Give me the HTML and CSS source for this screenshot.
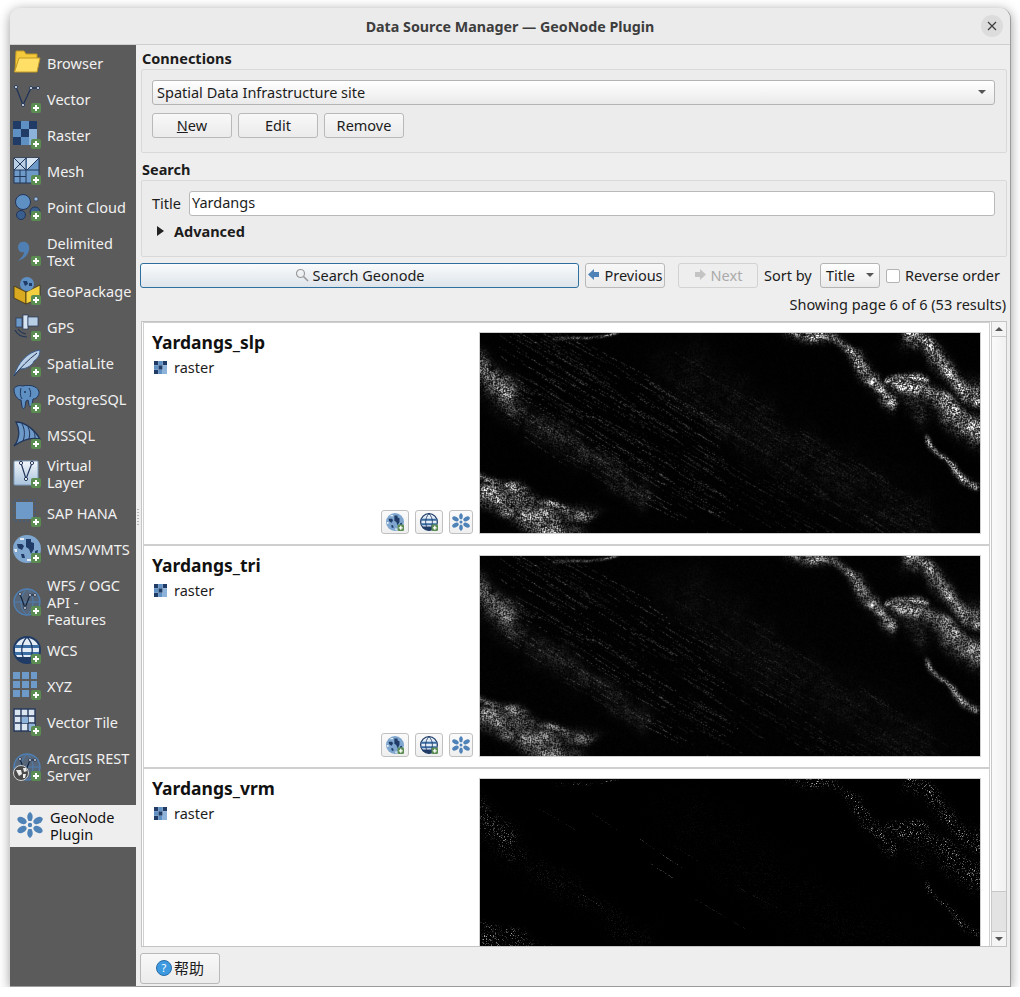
FILE: index.html
```html
<!DOCTYPE html>
<html lang="en">
<head>
  <meta charset="UTF-8" />
  <title>Data Source Manager — GeoNode Plugin</title>
  <link rel="stylesheet" href="styles.css">
</head>
<body>

  <svg class="icon-defs" aria-hidden="true">
    <defs>
      <linearGradient id="paleBox" x1="0" y1="0" x2="0" y2="1">
        <stop offset="0" stop-color="#f2f6fa"/>
        <stop offset="1" stop-color="#a9c3dd"/>
      </linearGradient>
      <g id="i-plus">
        <rect x="18" y="18" width="10" height="10" rx="2" fill="#5b8c51"/>
        <path d="M23 20v6M20 23h6" stroke="#fff" stroke-width="2"/>
      </g>
      <g id="i-folder">
        <path d="M2 23 3 2h8l2 3h11v5H7z" fill="#f4c93c" stroke="#c39a22"/>
        <path d="M1.500 23 6 9h21l-3 14z" fill="#ffdf66" stroke="#c39a22"/>
      </g>
      <g id="i-vector" fill="#fff" stroke="#22365a" stroke-width="1">
        <path d="M3 2 10 20 18 3h7" fill="none" stroke-width="1.300"/>
        <circle cx="3" cy="2" r="1.500"/>
        <circle cx="10" cy="20" r="1.500"/>
        <circle cx="18" cy="3" r="1.500"/>
        <circle cx="25" cy="3" r="1.500"/>
      </g>
      <g id="i-raster">
        <path d="M0 0h8v8H0zM16 0h8v8h-8zM8 8h8v8H8zM0 16h8v8H0z" fill="#1f3b66"/>
        <path d="M8 0h8v8H8zM0 8h8v8H0zM8 16h8v8H8z" fill="#5f90c4"/>
        <path d="M16 8h8v8h-8zM16 16h8v8h-8z" fill="#8db3da"/>
      </g>
      <g id="i-mesh">
        <rect x="1" y="1" width="25" height="25" fill="#6d9ac8" stroke="#22365a"/>
        <path d="M1 13h12V1H1z" fill="#b9cfe5"/>
        <path d="M14 13V1h12z" fill="#d7e4f1"/>
        <path d="M1 1l12 12M13 1 1 13M13 1v25M1 13h25M1 19.500h12M7 13v13M14 13 26 1" stroke="#22365a" fill="none"/>
      </g>
      <g id="i-cloud">
        <circle cx="10" cy="9" r="7.500" fill="#5f90c4" stroke="#22365a"/>
        <circle cx="23" cy="6" r="2" fill="#9dbcdc" stroke="#22365a" stroke-width=".6"/>
        <circle cx="8" cy="22" r="4.500" fill="#3a5f8f" stroke="#22365a"/>
        <circle cx="22" cy="19" r="5" fill="#3a5f8f" stroke="#22365a"/>
      </g>
      <g id="i-comma">
        <path d="M9 4c5-1 8 3 7 8-1 5-5 9-11 11 3-3 6-6 6-9-3 1-6-1-6-5 0-3 2-5 4-5z" fill="#4f7fb3"/>
      </g>
      <g id="i-geopackage">
        <path d="M1 9 13 15v12L1 21z" fill="#d9a91f" stroke="#3b3216" stroke-width=".8"/>
        <path d="M13 15 27 8v13l-14 6z" fill="#f4d03f" stroke="#3b3216" stroke-width=".8"/>
        <circle cx="14" cy="7" r="7" fill="#5f90c4"/>
        <path d="M10 4h4l1 3-3 2zM16 6h3v3h-3z" fill="#1f3b66"/>
      </g>
      <g id="i-gps">
        <rect x="3" y="5" width="6" height="9" fill="#6d9ac8" stroke="#22365a" stroke-width=".7"/>
        <rect x="10" y="2" width="5" height="14" fill="#d7e4f1" stroke="#22365a" stroke-width=".7"/>
        <rect x="15" y="4" width="10" height="9" fill="#b9cfe5" stroke="#22365a" stroke-width=".7"/>
        <path d="M2 17c2 4 6 7 12 7M5 16c2 3 4 4 8 5" fill="none" stroke="#22365a" stroke-width="1.200"/>
      </g>
      <g id="i-feather">
        <path d="M1 27C5 14 14 3 27 1c0 6-3 9-6 11-1 3-6 8-14 8-2 2-4 4-6 7z" fill="#b9cfe5" stroke="#3a5f8f"/>
        <path d="M1 27C8 18 15 11 24 4" fill="none" stroke="#22365a"/>
      </g>
      <g id="i-elephant">
        <path d="M1 5C1 1 6 0 10 1c3-1 9-1 12 1 4 2 5 6 3 9-1 2-3 3-5 3l-1 6c-1 2-3 2-3 0l-1-5-2 1-1 6c-1 2-2 2-3 0l-1-7C5 15 1 10 1 5z" fill="#5f90c4" stroke="#22365a"/>
        <path d="M8 3c-1 4-1 8 1 11M16 3c2 3 2 6 1 9" fill="none" stroke="#22365a"/>
        <circle cx="12" cy="7" r="1" fill="#22365a"/>
      </g>
      <g id="i-sail">
        <path d="M1 25C7 18 7 8 3 1c9 0 19 8 24 17-9-2-18 1-26 7z" fill="#6d9ac8" stroke="#22365a" stroke-width="1.300"/>
        <path d="M9 3c3 5 3 12 1 17M15 6c2 4 2 8 1 12M21 11c1 2 1 4 1 6" fill="none" stroke="#22365a"/>
      </g>
      <g id="i-virtual">
        <rect x="1" y="1" width="24" height="24" rx="1" fill="url(#paleBox)" stroke="#7f9dbd"/>
        <path d="M8 3 13 19 19 3" fill="none" stroke="#22365a" stroke-width="1.200"/>
        <g fill="#fff" stroke="#22365a">
          <circle cx="8" cy="3" r="1.600"/>
          <circle cx="13" cy="19" r="1.600"/>
          <circle cx="19" cy="3" r="1.600"/>
        </g>
      </g>
      <g id="i-hana">
        <rect x="1" y="1" width="21" height="21" fill="none" stroke="#3a5f8f" stroke-dasharray="2 2"/>
        <rect x="3" y="3" width="17" height="17" fill="#6d9ac8"/>
      </g>
      <g id="i-globe">
        <circle cx="14" cy="14" r="14" fill="#7ea6cf"/>
        <path d="M4 9h5l2 2-2 4-4-2zM13 4h5v3l3 1v6l-3 5-2-5-3-2zM8 19h3l1 4H9zM22 16l3-1-1 5-2 1z" fill="#1f3b66"/>
        <path d="M7 3h4v2H7zM1 14h3v3H2zM14 24h5v2h-5z" fill="#e4edf6"/>
      </g>
      <g id="i-wfs">
        <circle cx="14" cy="14" r="13" fill="#4f7fb3" fill-opacity=".35" stroke="#4f7fb3" stroke-width="1.400"/>
        <path d="M1 14h26M14 1c-8 7-8 19 0 26M14 1c8 7 8 19 0 26" fill="none" stroke="#4f7fb3"/>
        <path d="M7 6l5 14 5-13h5" fill="none" stroke="#14233f" stroke-width="1.200"/>
        <g fill="#fff" stroke="#14233f" stroke-width=".8">
          <circle cx="7" cy="6" r="1.400"/>
          <circle cx="12" cy="20" r="1.400"/>
          <circle cx="17" cy="7" r="1.400"/>
          <circle cx="22" cy="7" r="1.400"/>
        </g>
      </g>
      <g id="i-wcs">
        <circle cx="14" cy="14" r="13" fill="#e4edf6" stroke="#1f3b66" stroke-width="2"/>
        <path d="M2 9h24v3H2zM2 16h24v3H2z" fill="#3a6ea5"/>
        <path d="M14 1c-7 7-7 19 0 26M14 1c7 7 7 19 0 26" fill="none" stroke="#1f3b66" stroke-width="1.300"/>
        <path d="M3 21h22c-3 4-7 6-11 6s-8-2-11-6z" fill="#1f3b66"/>
      </g>
      <g id="i-xyz" fill="#6d9ac8">
        <rect x="0" y="0" width="7" height="7"/><rect x="9" y="0" width="7" height="7"/><rect x="18" y="0" width="6" height="7"/>
        <rect x="0" y="9" width="7" height="7"/><rect x="9" y="9" width="7" height="7"/><rect x="18" y="9" width="6" height="7"/>
        <rect x="0" y="18" width="7" height="7"/><rect x="9" y="18" width="7" height="7"/>
      </g>
      <g id="i-vtile">
        <rect x="1" y="1" width="21" height="22" fill="#dbe6f1" stroke="#22365a" stroke-width="1.400"/>
        <path d="M2 8h20M2 15h20M8 1v22M15 1v22" stroke="#22365a" stroke-width="1.400"/>
        <path d="M9 9h6v6H9zM16 16h6v7h-6z" fill="#8db3da"/>
      </g>
      <g id="i-arcgis">
        <use href="#i-wfs"/>
        <circle cx="8" cy="20" r="7.500" fill="#4a4a4a" stroke="#d0d0d0"/>
        <path d="M3 17h5l1 4-3 2zM10 15h3l1 3-3 1zM10 21h3l-1 4-2 0z" fill="#ececec"/>
      </g>
      <g id="i-flower" fill="#4f83b8">
        <path d="M13 0c3 2 3.500 5 1.500 9h-3C9.500 5 10 2 13 0zM13 26c-3-2-3.500-5-1.500-9h3c2 4 1.500 7-1.500 9z"/>
        <ellipse cx="5" cy="8.500" rx="5" ry="3.200" transform="rotate(28 5 8.500)"/>
        <ellipse cx="21" cy="8.500" rx="5" ry="3.200" transform="rotate(-28 21 8.500)"/>
        <ellipse cx="5" cy="17.500" rx="5" ry="3.200" transform="rotate(-28 5 17.500)"/>
        <ellipse cx="21" cy="17.500" rx="5" ry="3.200" transform="rotate(28 21 17.500)"/>
        <circle cx="13" cy="13" r="2.200"/>
      </g>
    </defs>
  </svg>

  <div class="window">
    <header class="titlebar">
      <span>Data Source Manager — GeoNode Plugin</span>
      <button class="close-btn" aria-label="Close">
        <svg width="10" height="10" viewBox="0 0 10 10"><path d="M1 1l8 8M9 1 1 9" stroke="#3d3d3d" stroke-width="1.200"/></svg>
      </button>
    </header>

    <div class="dialog">
      <nav class="sidebar">
        <a class="nav-item"><svg class="nav-icon"><use href="#i-folder"/></svg>Browser</a>
        <a class="nav-item"><svg class="nav-icon"><use href="#i-vector"/><use href="#i-plus"/></svg>Vector</a>
        <a class="nav-item"><svg class="nav-icon"><use href="#i-raster"/><use href="#i-plus"/></svg>Raster</a>
        <a class="nav-item"><svg class="nav-icon"><use href="#i-mesh"/><use href="#i-plus"/></svg>Mesh</a>
        <a class="nav-item"><svg class="nav-icon"><use href="#i-cloud"/><use href="#i-plus"/></svg>Point Cloud</a>
        <a class="nav-item nav-delim"><svg class="nav-icon"><use href="#i-comma"/><use href="#i-plus"/></svg>Delimited<br>Text</a>
        <a class="nav-item"><svg class="nav-icon"><use href="#i-geopackage"/><use href="#i-plus"/></svg>GeoPackage</a>
        <a class="nav-item"><svg class="nav-icon"><use href="#i-gps"/><use href="#i-plus"/></svg>GPS</a>
        <a class="nav-item"><svg class="nav-icon"><use href="#i-feather"/><use href="#i-plus"/></svg>SpatiaLite</a>
        <a class="nav-item"><svg class="nav-icon"><use href="#i-elephant"/><use href="#i-plus"/></svg>PostgreSQL</a>
        <a class="nav-item"><svg class="nav-icon"><use href="#i-sail"/><use href="#i-plus"/></svg>MSSQL</a>
        <a class="nav-item nav-two"><svg class="nav-icon"><use href="#i-virtual"/><use href="#i-plus"/></svg>Virtual<br>Layer</a>
        <a class="nav-item"><svg class="nav-icon"><use href="#i-hana"/><use href="#i-plus"/></svg>SAP HANA</a>
        <a class="nav-item"><svg class="nav-icon"><use href="#i-globe"/><use href="#i-plus"/></svg>WMS/WMTS</a>
        <a class="nav-item nav-three"><svg class="nav-icon"><use href="#i-wfs"/><use href="#i-plus"/></svg>WFS / OGC<br>API -<br>Features</a>
        <a class="nav-item"><svg class="nav-icon"><use href="#i-wcs"/><use href="#i-plus"/></svg>WCS</a>
        <a class="nav-item"><svg class="nav-icon"><use href="#i-xyz"/><use href="#i-plus"/></svg>XYZ</a>
        <a class="nav-item"><svg class="nav-icon"><use href="#i-vtile"/><use href="#i-plus"/></svg>Vector Tile</a>
        <a class="nav-item nav-arcgis"><svg class="nav-icon"><use href="#i-arcgis"/><use href="#i-plus"/></svg>ArcGIS REST<br>Server</a>
        <a class="nav-item nav-active"><svg class="nav-icon"><use href="#i-flower"/></svg>GeoNode<br>Plugin</a>
      </nav>

      <main class="content">
        <div class="group-title">Connections</div>
        <section class="group group-conn">
          <div class="combo combo-wide">
            <span>Spatial Data Infrastructure site</span>
            <i class="caret"></i>
          </div>
          <div class="btn-row">
            <button class="btn btn-std"><span><u>N</u>ew</span></button>
            <button class="btn btn-std">Edit</button>
            <button class="btn btn-std">Remove</button>
          </div>
        </section>

        <div class="group-title group-title-search">Search</div>
        <section class="group group-search">
          <div class="title-row">
            <label class="title-label">Title</label>
            <div class="text-input">Yardangs</div>
          </div>
          <div class="advanced"><i class="arrow-right"></i><b>Advanced</b></div>
        </section>

        <div class="toolbar">
          <button class="btn btn-search">
            <svg width="14" height="14" viewBox="0 0 14 14"><circle cx="5.500" cy="5.500" r="4" fill="none" stroke="#9a9a9a" stroke-width="1.200"/><path d="M8.500 8.500l4.500 4.500" stroke="#9a9a9a" stroke-width="1.600"/></svg>
            Search Geonode
          </button>
          <button class="btn btn-std btn-prev">
            <svg width="13" height="13" viewBox="0 0 13 13"><path d="M7 1 1 6.500 7 12V9h5V4H7z" fill="#4f83b8"/></svg>
            Previous
          </button>
          <button class="btn btn-std btn-next" disabled>
            <svg width="13" height="13" viewBox="0 0 13 13"><path d="M6 1l6 5.500L6 12V9H1V4h5z" fill="#c4c4c4"/></svg>
            Next
          </button>
          <span class="sort-label">Sort by</span>
          <div class="combo combo-sort"><span>Title</span><i class="caret"></i></div>
          <i class="checkbox"></i>
          <span class="reverse-label">Reverse order</span>
        </div>

        <div class="status">Showing page 6 of 6 (53 results)</div>

        <div class="list">
          <div class="cards">
            <article class="card">
              <div class="card-info">
                <h3>Yardangs_slp</h3>
                <div class="layer-type"><svg width="13" height="13" viewBox="0 0 24 24"><use href="#i-raster"/></svg>raster</div>
                <div class="card-actions">
                  <button class="mini-btn mini-wide"><svg width="18" height="18" viewBox="0 0 28 28"><use href="#i-globe"/><use href="#i-plus"/></svg></button>
                  <button class="mini-btn mini-wide"><svg width="18" height="18" viewBox="0 0 28 28"><use href="#i-wcs"/><use href="#i-plus"/></svg></button>
                  <button class="mini-btn"><svg width="18" height="18" viewBox="0 0 26 26"><use href="#i-flower"/></svg></button>
                </div>
              </div>
              <canvas class="thumb" width="500" height="200" data-kind="slp"></canvas>
            </article>
            <article class="card">
              <div class="card-info">
                <h3>Yardangs_tri</h3>
                <div class="layer-type"><svg width="13" height="13" viewBox="0 0 24 24"><use href="#i-raster"/></svg>raster</div>
                <div class="card-actions">
                  <button class="mini-btn mini-wide"><svg width="18" height="18" viewBox="0 0 28 28"><use href="#i-globe"/><use href="#i-plus"/></svg></button>
                  <button class="mini-btn mini-wide"><svg width="18" height="18" viewBox="0 0 28 28"><use href="#i-wcs"/><use href="#i-plus"/></svg></button>
                  <button class="mini-btn"><svg width="18" height="18" viewBox="0 0 26 26"><use href="#i-flower"/></svg></button>
                </div>
              </div>
              <canvas class="thumb" width="500" height="200" data-kind="tri"></canvas>
            </article>
            <article class="card">
              <div class="card-info">
                <h3>Yardangs_vrm</h3>
                <div class="layer-type"><svg width="13" height="13" viewBox="0 0 24 24"><use href="#i-raster"/></svg>raster</div>
              </div>
              <canvas class="thumb" width="500" height="200" data-kind="vrm"></canvas>
            </article>
          </div>
          <div class="scrollbar">
            <div class="scroll-btn"><i class="scroll-up"></i></div>
            <div class="scroll-handle"></div>
            <div class="scroll-track"></div>
            <div class="scroll-btn"><i class="scroll-down"></i></div>
          </div>
        </div>

        <div class="footer">
          <button class="btn btn-help"><span class="help-icon">?</span>帮助</button>
        </div>

        <i class="splitter"></i>
      </main>
    </div>
  </div>

  <script src="thumbs.js"></script>
</body>
</html>
```

FILE: styles.css
```css
* {
  box-sizing: border-box;
}

body {
  margin: 0;
  background-color: #fff;
  font-family: 'Noto Sans', sans-serif;
  font-size: 14.5px;
  color: #1c1c1c;
}

.icon-defs {
  position: absolute;
  width: 0;
  height: 0;
}

.window {
  display: flex;
  flex-direction: column;
  width: 1001px;
  height: 979px;
  margin: 8px 0 0 10px;
  border-radius: 11px 11px 0 0;
  border-right: 1px solid #9c9c9c;
  border-bottom: 1px solid #9c9c9c;
  overflow: hidden;
  box-shadow: 0 2px 12px rgba(0, 0, 0, 0.4);
  background-color: #eee;
}

.titlebar {
  display: flex;
  align-items: center;
  justify-content: center;
  position: relative;
  height: 37px;
  flex-shrink: 0;
  background-color: #ebebeb;
  border-bottom: 1px solid #cfcfcf;
  font-weight: bold;
  font-size: 14.25px;
  color: #3d3d3d;
}

.close-btn {
  position: absolute;
  right: 7px;
  top: 7px;
  width: 22px;
  height: 22px;
  padding: 0;
  display: flex;
  align-items: center;
  justify-content: center;
  border: 0;
  border-radius: 50%;
  background-color: #dcdcdc;
}

.dialog {
  display: flex;
  flex: 1;
  min-height: 0;
}

/* left source list */
.sidebar {
  width: 126px;
  flex-shrink: 0;
  background-color: #5b5b5b;
  color: #f1f1f1;
  line-height: 17px;
}

.nav-item {
  display: flex;
  align-items: center;
  gap: 6px;
  height: 36px;
  padding-left: 3px;
  white-space: nowrap;
}

.nav-icon {
  width: 28px;
  height: 28px;
  flex-shrink: 0;
}

.nav-delim {
  height: 48px;
  padding-top: 6px;
}

.nav-two {
  height: 42px;
}

.nav-three {
  height: 65px;
  padding-top: 5px;
}

.nav-arcgis {
  height: 53px;
}

.nav-active {
  height: 42px;
  gap: 5px;
  margin-top: 12px;
  padding-left: 7px;
  background-color: #eee;
  color: #111;
}

/* right panel */
.content {
  position: relative;
  flex: 1;
  min-width: 0;
  display: flex;
  flex-direction: column;
  padding: 0 3px 0 4px;
  background-color: #eee;
}

.splitter {
  position: absolute;
  left: 1px;
  top: 464px;
  width: 2px;
  height: 16px;
  background-image: linear-gradient(#b5b5b5 50%, transparent 50%);
  background-size: 2px 3px;
}

.group-title {
  height: 24px;
  padding: 3px 0 0 2px;
  font-weight: bold;
  line-height: 20px;
}

.group-title-search {
  height: 27px;
  padding-top: 6px;
}

.group {
  margin-left: 1px;
  border: 1px solid #d9d9d9;
  border-radius: 2px;
  padding: 10px 11px 0 10px;
  background-color: #ececec;
}

.group-conn {
  height: 84px;
}

.group-search {
  height: 77px;
}

.combo {
  display: flex;
  align-items: center;
  justify-content: space-between;
  height: 25px;
  padding-bottom: 1px;
  border: 1px solid #b4b4b4;
  border-radius: 3px;
  background: linear-gradient(#fff, #eaeaea);
}

.combo-wide {
  padding-left: 4px;
  padding-right: 8px;
}

.combo-sort {
  width: 60px;
  padding-left: 5px;
  padding-right: 5px;
  margin-right: 6px;
}

.caret {
  width: 0;
  height: 0;
  border-left: 4px solid transparent;
  border-right: 4px solid transparent;
  border-top: 4px solid #555;
}

.btn-row {
  display: flex;
  gap: 6px;
  margin-top: 8px;
}

.btn {
  display: flex;
  align-items: center;
  justify-content: center;
  gap: 4px;
  height: 25px;
  padding: 0 0 2px;
  font-family: inherit;
  font-size: 14.5px;
  color: #1c1c1c;
  border: 1px solid #b9b9b9;
  border-radius: 3px;
  background: linear-gradient(#f8f8f8, #ebebeb);
}

.btn-std {
  width: 80px;
}

.title-row {
  display: flex;
  align-items: center;
  gap: 6px;
}

.title-label {
  width: 31px;
  padding-bottom: 2px;
  white-space: nowrap;
}

.text-input {
  flex: 1;
  height: 25px;
  padding-left: 2px;
  line-height: 21px;
  background-color: #fff;
  border: 1px solid #b9b9b9;
  border-radius: 3px;
}

.advanced {
  display: flex;
  align-items: center;
  gap: 10px;
  height: 24px;
  margin-top: 3px;
  padding-left: 5px;
}

.arrow-right {
  width: 0;
  height: 0;
  border-top: 5px solid transparent;
  border-bottom: 5px solid transparent;
  border-left: 7px solid #222;
}

.toolbar {
  display: flex;
  align-items: center;
  height: 25px;
  margin-top: 6px;
}

.btn-search {
  flex: 1;
  gap: 4px;
  border-color: #2f6f9f;
  background: linear-gradient(#fafbfc, #dde4ea);
}

.btn-prev {
  margin-left: 6px;
}

.btn-next {
  margin-left: 13px;
  color: #aaa;
  border-color: #d2d2d2;
  background: #eee;
}

.sort-label {
  width: 50px;
  margin-left: 6px;
  margin-right: 6px;
  padding-bottom: 2px;
  white-space: nowrap;
}

.checkbox {
  width: 14px;
  height: 14px;
  margin-right: 5px;
  background-color: #fff;
  border: 1px solid #b4b4b4;
  border-radius: 2px;
}

.reverse-label {
  width: 102px;
  padding-bottom: 2px;
  white-space: nowrap;
}

.status {
  height: 33px;
  padding-right: 1px;
  line-height: 32px;
  text-align: right;
}

/* results */
.list {
  display: flex;
  height: 626px;
  margin-left: 1px;
  border: 1px solid #c4c4c4;
  background-color: #fff;
  overflow: hidden;
}

.cards {
  flex: 1;
  min-width: 0;
  padding-left: 1px;
  overflow: hidden;
}

.card {
  display: flex;
  gap: 6px;
  height: 223px;
  padding: 9px 8px 0 8px;
  border: 1px solid #cfcfcf;
}

.card-info {
  position: relative;
  display: flex;
  flex-direction: column;
  flex: 1;
  height: 202px;
}

.card-info h3 {
  margin: -1px 0 0;
  font-size: 17.5px;
  line-height: 22px;
  color: #111;
}

.layer-type {
  display: flex;
  align-items: center;
  gap: 7px;
  margin-top: 4px;
  padding-left: 2px;
  line-height: 20px;
}

.card-actions {
  display: flex;
  justify-content: flex-end;
  gap: 6px;
  margin-top: auto;
}

.mini-btn {
  display: flex;
  align-items: center;
  justify-content: center;
  width: 24px;
  height: 24px;
  padding: 0;
  border: 1px solid #c0c0c0;
  border-radius: 3px;
  background: linear-gradient(#fafafa, #efefef);
}

.mini-wide {
  width: 28px;
}

.thumb {
  display: block;
  width: 502px;
  height: 202px;
  flex-shrink: 0;
  border: 1px solid #cfcfcf;
  background-color: #000;
}

.scrollbar {
  display: flex;
  flex-direction: column;
  width: 15px;
  margin-left: 1px;
  flex-shrink: 0;
  border-left: 1px solid #c8c8c8;
}

.scroll-btn {
  display: flex;
  align-items: center;
  justify-content: center;
  height: 14px;
  flex-shrink: 0;
  background-color: #f4f4f4;
}

.scroll-up {
  border-left: 4px solid transparent;
  border-right: 4px solid transparent;
  border-bottom: 4px solid #555;
}

.scroll-down {
  border-left: 4px solid transparent;
  border-right: 4px solid transparent;
  border-top: 4px solid #555;
}

.scroll-handle {
  height: 556px;
  background: linear-gradient(90deg, #fafafa, #f1f1f1);
  border-top: 1px solid #c8c8c8;
  border-bottom: 1px solid #c8c8c8;
}

.scroll-track {
  flex: 1;
  background-color: #e3e3e3;
  border-bottom: 1px solid #c8c8c8;
}

.footer {
  flex: 1;
  padding-top: 6px;
}

.btn-help {
  width: 80px;
  height: 31px;
  gap: 2px;
  font-family: 'Noto Sans CJK SC', 'Noto Sans', sans-serif;
  font-size: 15px;
}

.help-icon {
  display: flex;
  align-items: center;
  justify-content: center;
  width: 16px;
  height: 16px;
  border-radius: 50%;
  background-color: #3d9ae0;
  border: 1px solid #2a6da5;
  color: #fff;
  font-family: 'Noto Sans', sans-serif;
  font-size: 11px;
  line-height: 1;
}
```

FILE: thumbs.js
```js
// Procedural stand-in for the terrain previews: speckle bands, warped so they look less tidy,
// plus faint diagonal streaks.
const BANDS = [
  { pts: [[311, 2], [348, 10], [381, 27], [398, 53], [411, 77]], w: 6, amp: 0.8 },
  { pts: [[431, 7], [465, 37], [498, 60]], w: 9, amp: 0.85 },
  { pts: [[408, 47], [438, 47]], w: 3.5, amp: 0.8 },
  { pts: [[421, 57], [465, 70], [498, 100]], w: 9, amp: 0.9 },
  { pts: [[445, 103], [465, 130], [498, 150]], w: 4, amp: 0.7 },
  { pts: [[0, 32], [15, 57], [38, 73]], w: 13, amp: 0.5 },
  { pts: [[38, 73], [65, 97], [125, 137], [165, 160]], w: 12, amp: 0.13 },
  { pts: [[0, 140], [32, 167], [108, 180]], w: 6, amp: 0.6 },
  { pts: [[0, 160], [48, 183], [98, 199]], w: 8, amp: 0.65 },
  { pts: [[75, 2], [138, 1]], w: 2, amp: 0.45 },
  { pts: [[398, 53], [440, 85]], w: 9, amp: 0.14 },
  { pts: [[210, 40], [270, 90], [330, 130], [440, 190]], w: 28, amp: 0.05 }
];

const KINDS = {
  slp: { gain: 1.5, power: 1.6, streak: 1, floor: 5, soften: true },
  tri: { gain: 1.1, power: 1.2, streak: 0.7, floor: 7, soften: true },
  vrm: { gain: 0.8, power: 8, streak: 0.02, floor: 1, soften: false }
};

function makeRandom(seed) {
  let s = seed;
  return () => {
    s = (s + 0x6d2b79f5) | 0;
    let t = Math.imul(s ^ (s >>> 15), 1 | s);
    t = (t + Math.imul(t ^ (t >>> 7), 61 | t)) ^ t;
    return ((t ^ (t >>> 14)) >>> 0) / 4294967296;
  };
}

// bilinear value noise on a coarse grid, returns 0..1
function makeNoise(cell, seed) {
  const rand = makeRandom(seed);
  const cols = Math.ceil(500 / cell) + 2;
  const rows = Math.ceil(200 / cell) + 2;
  const grid = new Float32Array(cols * rows).map(() => rand());
  return (x, y) => {
    const fx = x / cell;
    const fy = y / cell;
    const ix = Math.floor(fx);
    const iy = Math.floor(fy);
    const tx = fx - ix;
    const ty = fy - iy;
    const top = grid[iy * cols + ix] * (1 - tx) + grid[iy * cols + ix + 1] * tx;
    const bottom = grid[(iy + 1) * cols + ix] * (1 - tx) + grid[(iy + 1) * cols + ix + 1] * tx;
    return top * (1 - ty) + bottom * ty;
  };
}

function distToSegment(x, y, a, b) {
  const dx = b[0] - a[0];
  const dy = b[1] - a[1];
  let t = ((x - a[0]) * dx + (y - a[1]) * dy) / (dx * dx + dy * dy);
  t = Math.max(0, Math.min(1, t));
  return Math.hypot(x - a[0] - t * dx, y - a[1] - t * dy);
}

function buildDensity() {
  const density = new Float32Array(500 * 200);
  const warpX = makeNoise(22, 11);
  const warpY = makeNoise(22, 23);
  const clump = makeNoise(7, 37);
  for (let y = 0; y < 200; y++) {
    for (let x = 0; x < 500; x++) {
      const wx = x + (warpX(x, y) - 0.5) * 22;
      const wy = y + (warpY(x, y) - 0.5) * 22;
      let v = 0;
      for (const band of BANDS) {
        let d = 1e9;
        for (let i = 0; i < band.pts.length - 1; i++) {
          d = Math.min(d, distToSegment(wx, wy, band.pts[i], band.pts[i + 1]));
        }
        v = Math.max(v, band.amp * Math.exp(-(d * d) / (band.w * band.w)));
      }
      density[y * 500 + x] = v * (0.35 + 1.3 * clump(x, y));
    }
  }
  return density;
}

function soften(values) {
  const out = new Float32Array(values.length);
  for (let y = 0; y < 200; y++) {
    for (let x = 0; x < 500; x++) {
      const i = y * 500 + x;
      const left = x > 0 ? values[i - 1] : values[i];
      const right = x < 499 ? values[i + 1] : values[i];
      const up = y > 0 ? values[i - 500] : values[i];
      const down = y < 199 ? values[i + 500] : values[i];
      out[i] = values[i] * 0.6 + (left + right + up + down) * 0.1;
    }
  }
  return out;
}

function addStreak(values, rand, x, y, level) {
  const len = 12 + rand() * 40;
  const slope = 0.5 + rand() * 0.2;
  for (let i = 0; i < len; i++) {
    x += 1;
    y += slope;
    const px = Math.round(x);
    const py = Math.round(y);
    if (px < 0 || py < 0 || px >= 500 || py >= 200 || rand() < 0.4) continue;
    values[py * 500 + px] += level * rand();
  }
}

function drawThumb(canvas, density) {
  const kind = KINDS[canvas.dataset.kind];
  const rand = makeRandom(7);
  const ctx = canvas.getContext('2d');
  const img = ctx.createImageData(500, 200);
  let values = new Float32Array(500 * 200);

  for (let i = 0; i < values.length; i++) {
    const speck = Math.pow(rand(), kind.power);
    values[i] = density[i] * speck * 255 * kind.gain + rand() * rand() * kind.floor;
  }

  // fine streaks: a stronger set on the left, a very faint one in the middle
  const left = Math.round(260 * kind.streak);
  for (let n = 0; n < left; n++) {
    const x = 15 + rand() * 210;
    const y = 15 + x * 0.55 + (rand() - 0.5) * 130;
    addStreak(values, rand, x, y, 25 + rand() * 60);
  }
  const middle = Math.round(240 * kind.streak);
  for (let n = 0; n < middle; n++) {
    const x = 190 + rand() * 240;
    const y = (x - 190) * 0.6 + 15 + rand() * 120;
    addStreak(values, rand, x, y, 10 + rand() * 35);
  }

  if (kind.soften) values = soften(values);

  for (let i = 0; i < values.length; i++) {
    const v = Math.min(255, values[i]);
    img.data[i * 4] = v;
    img.data[i * 4 + 1] = v;
    img.data[i * 4 + 2] = v;
    img.data[i * 4 + 3] = 255;
  }
  ctx.putImageData(img, 0, 0);
}

const density = buildDensity();
document.querySelectorAll('.thumb').forEach(c => drawThumb(c, density));
```
